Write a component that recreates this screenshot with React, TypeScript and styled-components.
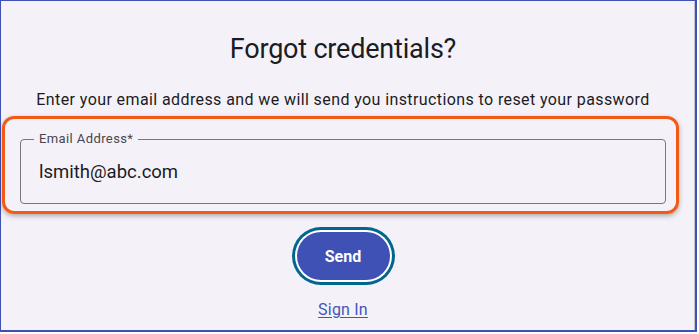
import React from 'react';
import styled, { createGlobalStyle } from 'styled-components';

const GlobalStyle = createGlobalStyle`
  html, body {
    margin: 0;
    padding: 0;
    background: #ffffff;
  }
  body {
    font-family: Roboto, "Liberation Sans", Arial, sans-serif;
  }
`;

const Frame = styled.div`
  box-sizing: border-box;
  width: 697px;
  height: 332px;
  padding-right: 10px;
  background: #f4f2f8;
  border-top: 1px solid #3f51b5;
  border-left: 1px solid #3f51b5;
  border-right: 2px solid #3f51b5;
  border-bottom: 2px solid #3f51b5;
  box-shadow: inset -1px 0 0 #c4c3cc;
  display: flex;
  flex-direction: column;
  align-items: center;
`;

const Title = styled.h1`
  margin: 30px 0 0;
  font-size: 27px;
  line-height: 36px;
  font-weight: 400;
  letter-spacing: -0.2px;
  color: #1c1b1f;
`;

const Subtitle = styled.p`
  margin: 23px 0 0;
  font-size: 16px;
  line-height: 20px;
  color: #1c1b1f;
  letter-spacing: 0.4px;
`;

const Highlight = styled.div`
  box-sizing: border-box;
  align-self: flex-start;
  width: 677px;
  margin: 6px 0 0 1px;
  padding: 12px 10px 7px 15px;
  border: 3px solid #f25a16;
  border-radius: 12px;
  box-shadow: 0 2px 5px rgba(0, 0, 0, 0.3);
`;

const Field = styled.fieldset`
  box-sizing: border-box;
  margin: 0;
  height: 73px;
  padding: 0 16px 0 18px;
  border: 1px solid #79747e;
  border-radius: 4px;
  display: flex;
  align-items: center;
`;

const Legend = styled.legend`
  padding: 0 5px;
  margin-left: -5px;
  font-size: 13px;
  line-height: 16px;
  letter-spacing: 0.4px;
  color: #49454f;
`;

const Value = styled.div`
  font-size: 18.5px;
  color: #1c1b1f;
  margin-top: -6px;
`;

const SendButton = styled.button`
  margin-top: 18px;
  width: 93px;
  height: 48px;
  border: none;
  border-radius: 24px;
  background: #3f51b5;
  color: #ffffff;
  font-family: inherit;
  font-size: 16px;
  font-weight: 700;
  box-shadow: 0 0 0 2px #ffffff, 0 0 0 5px #00678c;
  cursor: pointer;
`;

const SignInLink = styled.a`
  margin-top: 20px;
  font-size: 16px;
  line-height: 20px;
  letter-spacing: 0.2px;
  color: #4355b9;
  text-decoration: underline;
  text-underline-offset: 2px;
  cursor: pointer;
`;

export default function App() {
  return (
    <>
      <GlobalStyle />
      <Frame>
        <Title>Forgot credentials?</Title>
        <Subtitle>
          Enter your email address and we will send you instructions to reset your password
        </Subtitle>
        <Highlight>
          <Field>
            <Legend>Email Address*</Legend>
            <Value>lsmith@abc.com</Value>
          </Field>
        </Highlight>
        <SendButton>Send</SendButton>
        <SignInLink>Sign In</SignInLink>
      </Frame>
    </>
  );
}
